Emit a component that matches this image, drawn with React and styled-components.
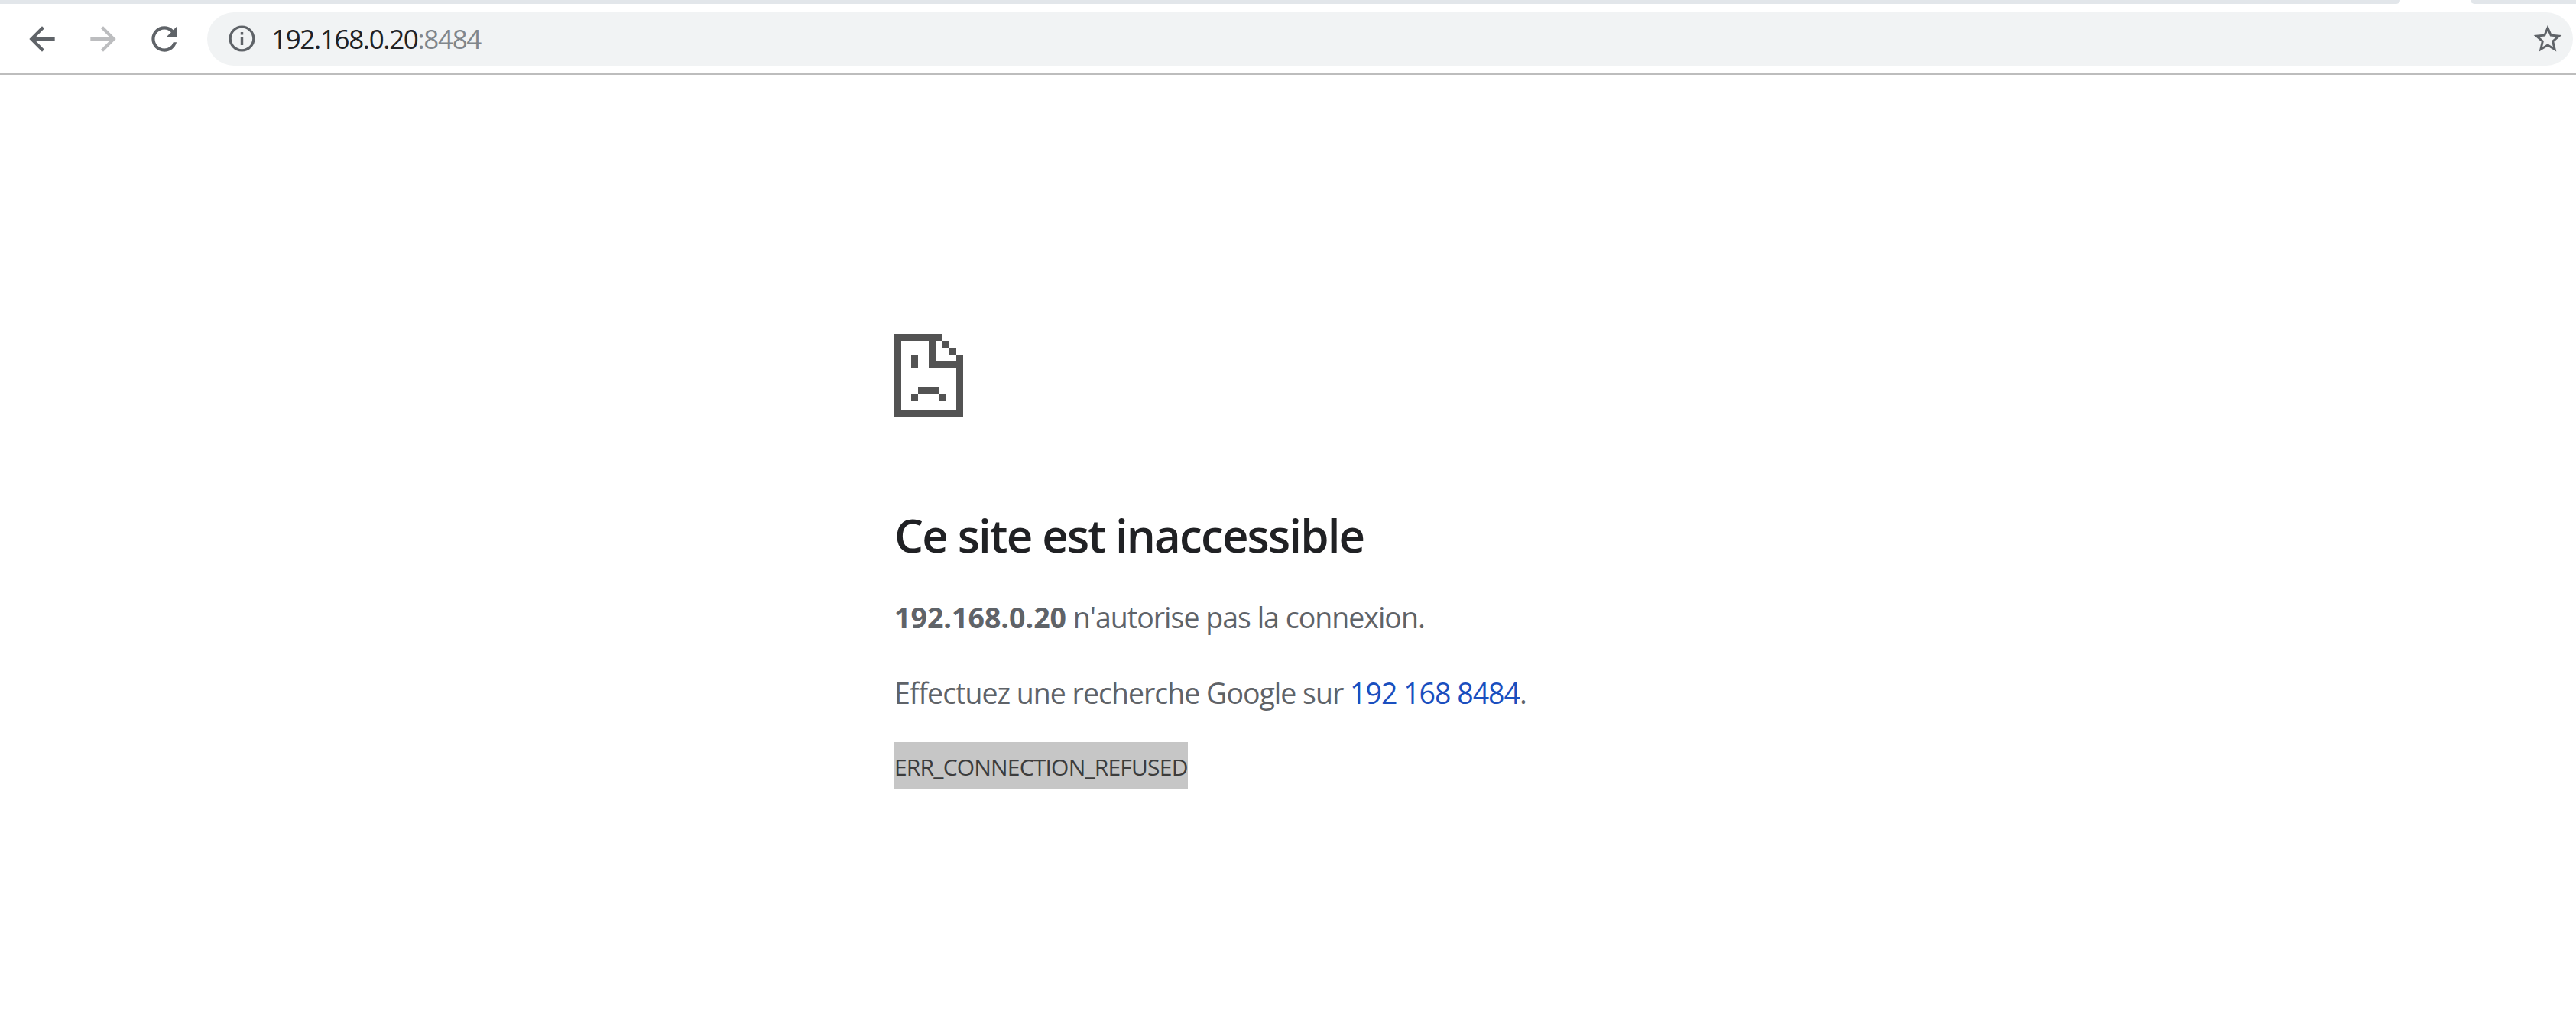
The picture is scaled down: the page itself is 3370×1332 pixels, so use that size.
import React from "react";
import styled, { createGlobalStyle } from "styled-components";

const Global = createGlobalStyle`
  html, body { margin: 0; padding: 0; background: #fff; }
  body { font-family: "Open Sans", "Noto Sans", sans-serif; overflow: hidden; }
`;

const Page = styled.div`
  width: 3370px;
  height: 1332px;
  display: flex;
  flex-direction: column;
  background: #fff;
  overflow: hidden;
`;

const TabStrip = styled.div`
  height: 5px;
  display: flex;
  gap: 92px;
  flex: none;
`;

const Tab = styled.div`
  background: #e2e6ea;
  flex: ${(p) => (p.$grow ? "1" : "none")};
  width: ${(p) => (p.$grow ? "auto" : "138px")};
  border-radius: ${(p) => (p.$grow ? "0 0 14px 0" : "0 0 0 14px")};
`;

const Toolbar = styled.div`
  height: 93px;
  flex: none;
  display: flex;
  align-items: center;
  padding-left: 15px;
  padding-right: 4px;
  border-bottom: 2px solid #bdbdbd;
  box-sizing: border-box;
`;

const NavButton = styled.div`
  width: 80px;
  height: 50px;
  flex: none;
  display: flex;
  align-items: center;
  justify-content: center;
  color: ${(p) => (p.$disabled ? "#bcbdbf" : "#5f6368")};
`;

const Omnibox = styled.div`
  flex: 1;
  height: 70px;
  margin-left: 16px;
  padding: 0 11px 0 25px;
  border-radius: 35px;
  background: #f1f3f4;
  display: flex;
  align-items: center;
  color: #5f6368;
`;

const Url = styled.div`
  flex: 1;
  margin-left: 18px;
  font-size: 35px;
  letter-spacing: -1.35px;
  color: #202124;
  white-space: nowrap;
`;

const Port = styled.span`
  color: #80868b;
`;

const Content = styled.main`
  padding: 339px 0 0 1170px;
  display: flex;
  flex-direction: column;
  align-items: flex-start;
`;

const SadFile = styled.svg`
  width: 90px;
  height: 109px;
  display: block;
  fill: #535353;
`;

const Title = styled.h1`
  margin: 114px 0 0;
  font-size: 60px;
  line-height: 80px;
  font-weight: 600;
  letter-spacing: -1.85px;
  color: #202124;
`;

const Paragraph = styled.p`
  margin: ${(p) => p.$top}px 0 0;
  font-size: 37.5px;
  line-height: 60px;
  letter-spacing: -1px;
  color: #5f6368;
`;

const Strong = styled.strong`
  font-weight: 700;
  letter-spacing: 0;
`;

const SearchLink = styled.a`
  color: #1a4fbf;
`;

const ErrorCode = styled.div`
  margin-top: 34px;
  height: 61px;
  line-height: 66px;
  font-size: 30px;
  letter-spacing: -0.8px;
  color: #3c3c3c;
  background: #c6c6c6;
`;

const Icon = ({ size, d }) => (
  <svg width={size} height={size} viewBox="0 0 24 24" fill="currentColor">
    <path d={d} />
  </svg>
);

const BACK = "M20 11H7.83l5.59-5.59L12 4l-8 8 8 8 1.41-1.41L7.83 13H20v-2z";
const FORWARD = "M12 4l-1.41 1.41L16.17 11H4v2h12.17l-5.58 5.59L12 20l8-8z";
const RELOAD = "M17.65 6.35A7.958 7.958 0 0 0 12 4c-4.42 0-7.99 3.58-7.99 8s3.57 8 7.99 8c3.73 0 6.84-2.55 7.73-6h-2.08A5.99 5.99 0 0 1 12 18c-3.31 0-6-2.69-6-6s2.69-6 6-6c1.66 0 3.14.69 4.22 1.78L13 11h7V4l-2.35 2.35z";
const INFO = "M11 7h2v2h-2zm0 4h2v6h-2zm1-9C6.48 2 2 6.48 2 12s4.48 10 10 10 10-4.48 10-10S17.52 2 12 2zm0 18c-4.41 0-8-3.59-8-8s3.59-8 8-8 8 3.59 8 8-3.59 8-8 8z";
const STAR = "M22 9.24l-7.19-.62L12 2 9.19 8.63 2 9.24l5.46 4.73L5.82 21 12 17.27 18.18 21l-1.63-7.03L22 9.24zM12 15.4l-3.76 2.27 1-4.28-3.32-2.88 4.38-.38L12 6.1l1.71 4.04 4.38.38-3.32 2.88 1 4.28L12 15.4z";

export default function App() {
  return (
    <Page>
      <Global />
      <TabStrip>
        <Tab $grow />
        <Tab />
      </TabStrip>
      <Toolbar>
        <NavButton><Icon size={50} d={BACK} /></NavButton>
        <NavButton $disabled><Icon size={50} d={FORWARD} /></NavButton>
        <NavButton><Icon size={50} d={RELOAD} /></NavButton>
        <Omnibox>
          <Icon size={41} d={INFO} />
          <Url>192.168.0.20<Port>:8484</Port></Url>
          <Icon size={44} d={STAR} />
        </Omnibox>
      </Toolbar>
      <Content>
        <SadFile viewBox="0 0 90 109">
          <path fillRule="evenodd" d="M0 0H63V9H72V18H81V27H90V109H0V0ZM9 9V100H81V45H45V9H9ZM54 9V36H81V27H72V18H63V9H54Z" />
          <rect x="22" y="27" width="9" height="18" />
          <rect x="31" y="70" width="27" height="9" />
          <rect x="22" y="79" width="9" height="9" />
          <rect x="58" y="79" width="9" height="9" />
        </SadFile>
        <Title>Ce site est inaccessible</Title>
        <Paragraph $top={38}><Strong>192.168.0.20</Strong> n'autorise pas la connexion.</Paragraph>
        <Paragraph $top={39}>Effectuez une recherche Google sur <SearchLink>192 168 8484</SearchLink>.</Paragraph>
        <ErrorCode>ERR_CONNECTION_REFUSED</ErrorCode>
      </Content>
    </Page>
  );
}
